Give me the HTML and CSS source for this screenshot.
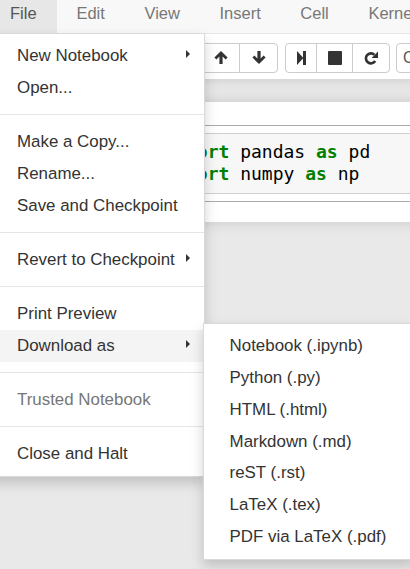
FILE: index.html
```html
<!DOCTYPE html>
<html lang="en">
<head>
<meta charset="utf-8">
<title>Notebook</title>
<link rel="stylesheet" href="styles.css">
</head>
<body>
<div class="page">
  <header class="header">
    <nav class="menubar">
      <div class="menu-top open">File
        <ul class="dropdown">
          <li class="item has-sub">New Notebook</li>
          <li class="item">Open...</li>
          <li class="divider"></li>
          <li class="item">Make a Copy...</li>
          <li class="item">Rename...</li>
          <li class="item">Save and Checkpoint</li>
          <li class="divider"></li>
          <li class="item has-sub">Revert to Checkpoint</li>
          <li class="divider"></li>
          <li class="item">Print Preview</li>
          <li class="item has-sub active">Download as
            <ul class="dropdown submenu">
              <li class="item">Notebook (.ipynb)</li>
              <li class="item">Python (.py)</li>
              <li class="item">HTML (.html)</li>
              <li class="item">Markdown (.md)</li>
              <li class="item">reST (.rst)</li>
              <li class="item">LaTeX (.tex)</li>
              <li class="item">PDF via LaTeX (.pdf)</li>
            </ul>
          </li>
          <li class="divider"></li>
          <li class="item disabled">Trusted Notebook</li>
          <li class="divider"></li>
          <li class="item">Close and Halt</li>
        </ul>
      </div>
      <div class="menu-top">Edit</div>
      <div class="menu-top">View</div>
      <div class="menu-top">Insert</div>
      <div class="menu-top">Cell</div>
      <div class="menu-top">Kernel</div>
      <div class="menu-top">Widgets</div>
      <div class="menu-top">Help</div>
    </nav>
    <div class="toolbar">
      <div class="btn-group">
        <div class="btn w38"></div>
      </div>
      <div class="btn-group">
        <div class="btn w38"></div>
      </div>
      <div class="btn-group">
        <div class="btn w36"></div>
        <div class="btn w36"></div>
        <div class="btn w36"></div>
      </div>
      <div class="btn-group">
        <div class="btn w39">
          <svg width="14" height="13" viewBox="0 0 14 13"><path d="M7 0 L13.6 6.4 L11.6 8.4 L8.6 5.4 V13 H5.4 V5.4 L2.4 8.4 L0.4 6.4 Z" fill="#333"/></svg>
        </div>
        <div class="btn w39">
          <svg width="14" height="13" viewBox="0 0 14 13"><path d="M7 13 L13.6 6.6 L11.6 4.6 L8.6 7.6 V0 H5.4 V7.6 L2.4 4.6 L0.4 6.6 Z" fill="#333"/></svg>
        </div>
      </div>
      <div class="btn-group">
        <div class="btn w32">
          <svg width="9" height="14" viewBox="0 0 9 14"><path d="M0 0 L6.4 7 L0 14 Z" fill="#333"/><rect x="6" y="0" width="3" height="14" fill="#333"/></svg>
        </div>
        <div class="btn w37">
          <svg width="14" height="14" viewBox="0 0 14 14"><rect x="0" y="0" width="14" height="14" rx="1" fill="#333"/></svg>
        </div>
        <div class="btn w38">
          <svg width="14" height="14" viewBox="0 0 14 14"><path d="M10.4 3.7 A5 5 0 1 0 11.2 10" fill="none" stroke="#333" stroke-width="2.6"/><path d="M14 0.6 V7 H7.6 Z" fill="#333"/></svg>
        </div>
      </div>
      <div class="cell-type">Code</div>
    </div>
  </header>
  <main class="site">
    <div class="notebook">
      <div class="cell">
        <div class="prompt">In&nbsp;[&nbsp;]:</div>
        <div class="input-area">
<pre class="code"><span class="kw">import</span> pandas <span class="kw">as</span> pd
<span class="kw">import</span> numpy <span class="kw">as</span> np</pre>
        </div>
      </div>
    </div>
  </main>
</div>
</body>
</html>
```
FILE: styles.css
```css
html {
  background: #e9e9e9;
  overflow: hidden;
}
body {
  margin: 0;
  min-height: 569px;
  font-family: "Liberation Sans", Arial, sans-serif;
  color: #333;
}
.page {
  margin-left: -10px;
  width: 1200px;
}
.header {
  position: relative;
  z-index: 2;
  background: #fff;
  box-shadow: 0 0 12px 1px rgba(87, 87, 87, 0.2);
}
.menubar {
  display: flex;
  height: 33px;
  background: #f8f8f8;
  border-bottom: 1px solid #e7e7e7;
}
.menu-top {
  position: relative;
  box-sizing: border-box;
  height: 33px;
  padding: 1.7px 19.8px 0;
  font-size: 16.5px;
  line-height: 23.4px;
  color: #777;
}
.menu-top:first-child {
  padding-left: 20px;
  padding-right: 20px;
}
.menu-top.open {
  background: #e7e7e7;
  color: #555;
}
.dropdown {
  position: absolute;
  top: 100%;
  left: 0;
  z-index: 10;
  box-sizing: border-box;
  min-width: 214px;
  margin: 0;
  padding: 6px 0;
  list-style: none;
  background: #fff;
  border: 1px solid rgba(0, 0, 0, 0.15);
  box-shadow: 0 6px 12px rgba(0, 0, 0, 0.175);
  font-size: 16.9px;
  line-height: 23.95px;
  color: #333;
}
.item {
  position: relative;
  padding: 4px 26px;
  white-space: nowrap;
}
.item.active {
  background: #f4f4f4;
}
.item.disabled {
  color: #777;
}
.has-sub::after {
  content: "";
  position: absolute;
  right: 14px;
  top: 10px;
  width: 0;
  height: 0;
  border-style: solid;
  border-width: 4.3px 0 4.3px 4.6px;
  border-color: transparent transparent transparent #333;
}
.divider {
  height: 1px;
  margin: 10.5px 0;
  background: #e5e5e5;
}
.submenu {
  top: 0;
  left: 100%;
  margin-top: -7px;
  margin-left: -1px;
  min-width: 211px;
}
.toolbar {
  display: flex;
  align-items: center;
  padding: 8.5px 0 6px 8px;
}
.btn-group {
  display: flex;
  margin-right: 7px;
}
.btn {
  box-sizing: border-box;
  display: flex;
  align-items: center;
  justify-content: center;
  height: 30px;
  background: #fff;
  border: 1px solid #ccc;
}
.btn + .btn {
  margin-left: -1px;
}
.btn:first-child {
  border-radius: 4px 0 0 4px;
}
.btn:last-child {
  border-radius: 0 4px 4px 0;
}
.btn:only-child {
  border-radius: 4px;
}
.w32 { width: 32px; }
.w36 { width: 36px; }
.w37 { width: 37px; }
.w38 { width: 38px; }
.w39 { width: 39px; }
.cell-type {
  box-sizing: border-box;
  height: 30px;
  width: 110px;
  margin-left: -1px;
  padding: 0 6px;
  border: 1px solid #ccc;
  border-radius: 4px;
  background: #fff;
  font-size: 15.6px;
  line-height: 28px;
  color: #555;
}
.site {
  padding-top: 23.5px;
}
.notebook {
  background: #fff;
  box-shadow: 0 0 12px 1px rgba(87, 87, 87, 0.2);
  padding: 23px 20px 20.5px;
}
.cell {
  display: flex;
  border: 1px solid #ababab;
  border-radius: 2px;
  padding: 7px 6.5px;
}
.prompt {
  width: 135.4px;
  flex: none;
  font-family: "DejaVu Sans Mono", monospace;
  font-size: 18px;
  color: #303f9f;
  text-align: right;
  padding-top: 8px;
}
.input-area {
  flex: 1;
  background: #f7f7f7;
  border: 1px solid #cfcfcf;
  border-radius: 2px;
}
.code {
  margin: 0;
  padding: 7.2px 10.4px 8.2px;
  font-family: "DejaVu Sans Mono", monospace;
  font-size: 18px;
  line-height: 21.8px;
  color: #000;
}
.kw {
  color: #008000;
  font-weight: bold;
}
```
